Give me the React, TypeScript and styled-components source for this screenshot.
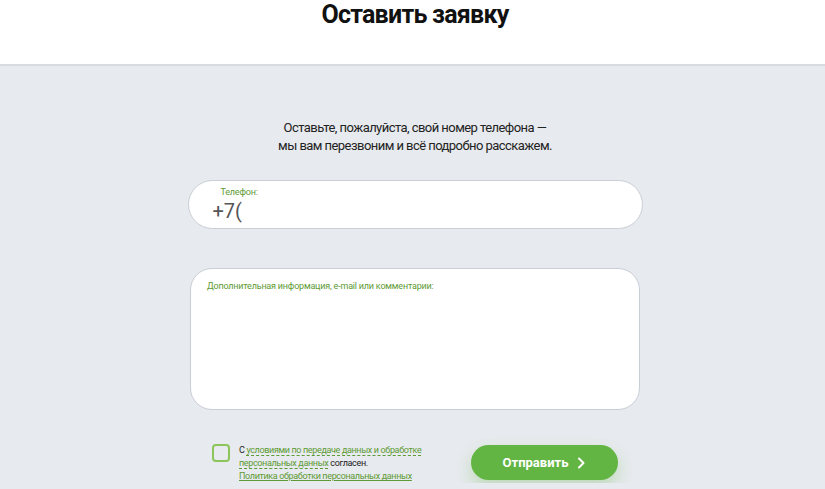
import React from 'react'
import styled, { createGlobalStyle } from 'styled-components'

const Colors = {
  page: '#e7eaee',
  border: '#c9ced6',
  green: '#62b543',
  label: '#5e9a34',
  text: '#222222',
}

const font = `Roboto, 'Noto Sans', sans-serif`

const GlobalStyle = createGlobalStyle`
  html, body {
    margin: 0;
    padding: 0;
    background: ${Colors.page};
  }
  body {
    font-family: ${font};
    color: ${Colors.text};
  }
`

export default function App() {
  return (
    <>
      <GlobalStyle />
      <Header>
        <Title>Оставить заявку</Title>
      </Header>
      <Main>
        <Intro>
          Оставьте, пожалуйста, свой номер телефона —
          <br />
          мы вам перезвоним и всё подробно расскажем.
        </Intro>
        <PhoneField>
          <FieldLabel>Телефон:</FieldLabel>
          <PhoneValue>+7(</PhoneValue>
        </PhoneField>
        <CommentField>
          <FieldLabel>Дополнительная информация, e-mail или комментарии:</FieldLabel>
        </CommentField>
        <Footer>
          <Consent>
            <Checkbox />
            <ConsentText>
              С <DashedLink>условиями по передаче данных и обработке</DashedLink>
              <br />
              <DashedLink>персональных данных</DashedLink> согласен.
              <br />
              <PolicyLink>Политика обработки персональных данных</PolicyLink>
            </ConsentText>
          </Consent>
          <SubmitButton>
            Отправить
            <svg width="10" height="12" viewBox="0 0 10 12" fill="none">
              <path d="M3 1.5 L7.5 6 L3 10.5" stroke="#fff" strokeWidth="2" strokeLinecap="round" strokeLinejoin="round" />
            </svg>
          </SubmitButton>
        </Footer>
      </Main>
    </>
  )
}

const Header = styled.header`
  height: 64px;
  background: #fff;
  border-bottom: 2px solid #d8dce2;
  display: flex;
  justify-content: center;
  padding-left: 5px;
`

const Title = styled.h1`
  margin: 0;
  font-size: 25px;
  line-height: 30px;
  font-weight: 700;
  color: #111;
  letter-spacing: -0.75px;
`

const Main = styled.main`
  display: flex;
  flex-direction: column;
  align-items: center;
  padding: 53px 0 0 5px;
`

const Intro = styled.p`
  margin: 0;
  font-size: 13px;
  line-height: 18px;
  text-align: center;
  letter-spacing: -0.55px;
  color: #222;
`

const PhoneField = styled.div`
  box-sizing: border-box;
  width: 455px;
  height: 49px;
  margin-top: 25px;
  background: #fff;
  border: 1px solid ${Colors.border};
  border-radius: 25px;
  padding: 5px 0 0 24px;
  display: flex;
  flex-direction: column;
`

const FieldLabel = styled.div`
  font-size: 9px;
  line-height: 12px;
  color: ${Colors.label};
  padding-left: 8px;
  letter-spacing: -0.2px;
`

const PhoneValue = styled.div`
  font-size: 20px;
  line-height: 26px;
  color: #555;
`

const CommentField = styled.div`
  box-sizing: border-box;
  width: 450px;
  height: 142px;
  margin-top: 39px;
  background: #fff;
  border: 1px solid ${Colors.border};
  border-radius: 22px;
  padding: 11px 0 0 8px;
`

const Footer = styled.div`
  width: 406px;
  margin-top: 34px;
  display: flex;
  justify-content: space-between;
  align-items: flex-start;
`

const Consent = styled.div`
  display: flex;
  gap: 9px;
`

const Checkbox = styled.div`
  box-sizing: border-box;
  width: 18px;
  height: 18px;
  border: 2px solid #8cc65b;
  border-radius: 4px;
  flex-shrink: 0;
`

const ConsentText = styled.div`
  font-size: 9px;
  line-height: 13px;
  letter-spacing: -0.35px;
  color: #222;
  white-space: nowrap;
`

const DashedLink = styled.span`
  color: ${Colors.label};
  border-bottom: 1px dashed ${Colors.label};
`

const PolicyLink = styled.span`
  color: ${Colors.label};
  text-decoration: underline;
`

const SubmitButton = styled.button`
  width: 147px;
  height: 35px;
  margin-top: 1px;
  border: none;
  border-radius: 18px;
  background: ${Colors.green};
  color: #fff;
  font-family: ${font};
  font-size: 13px;
  font-weight: 700;
  display: flex;
  align-items: center;
  justify-content: center;
  gap: 8px;
  box-shadow: 0 8px 16px rgba(98, 181, 67, 0.3);
`
